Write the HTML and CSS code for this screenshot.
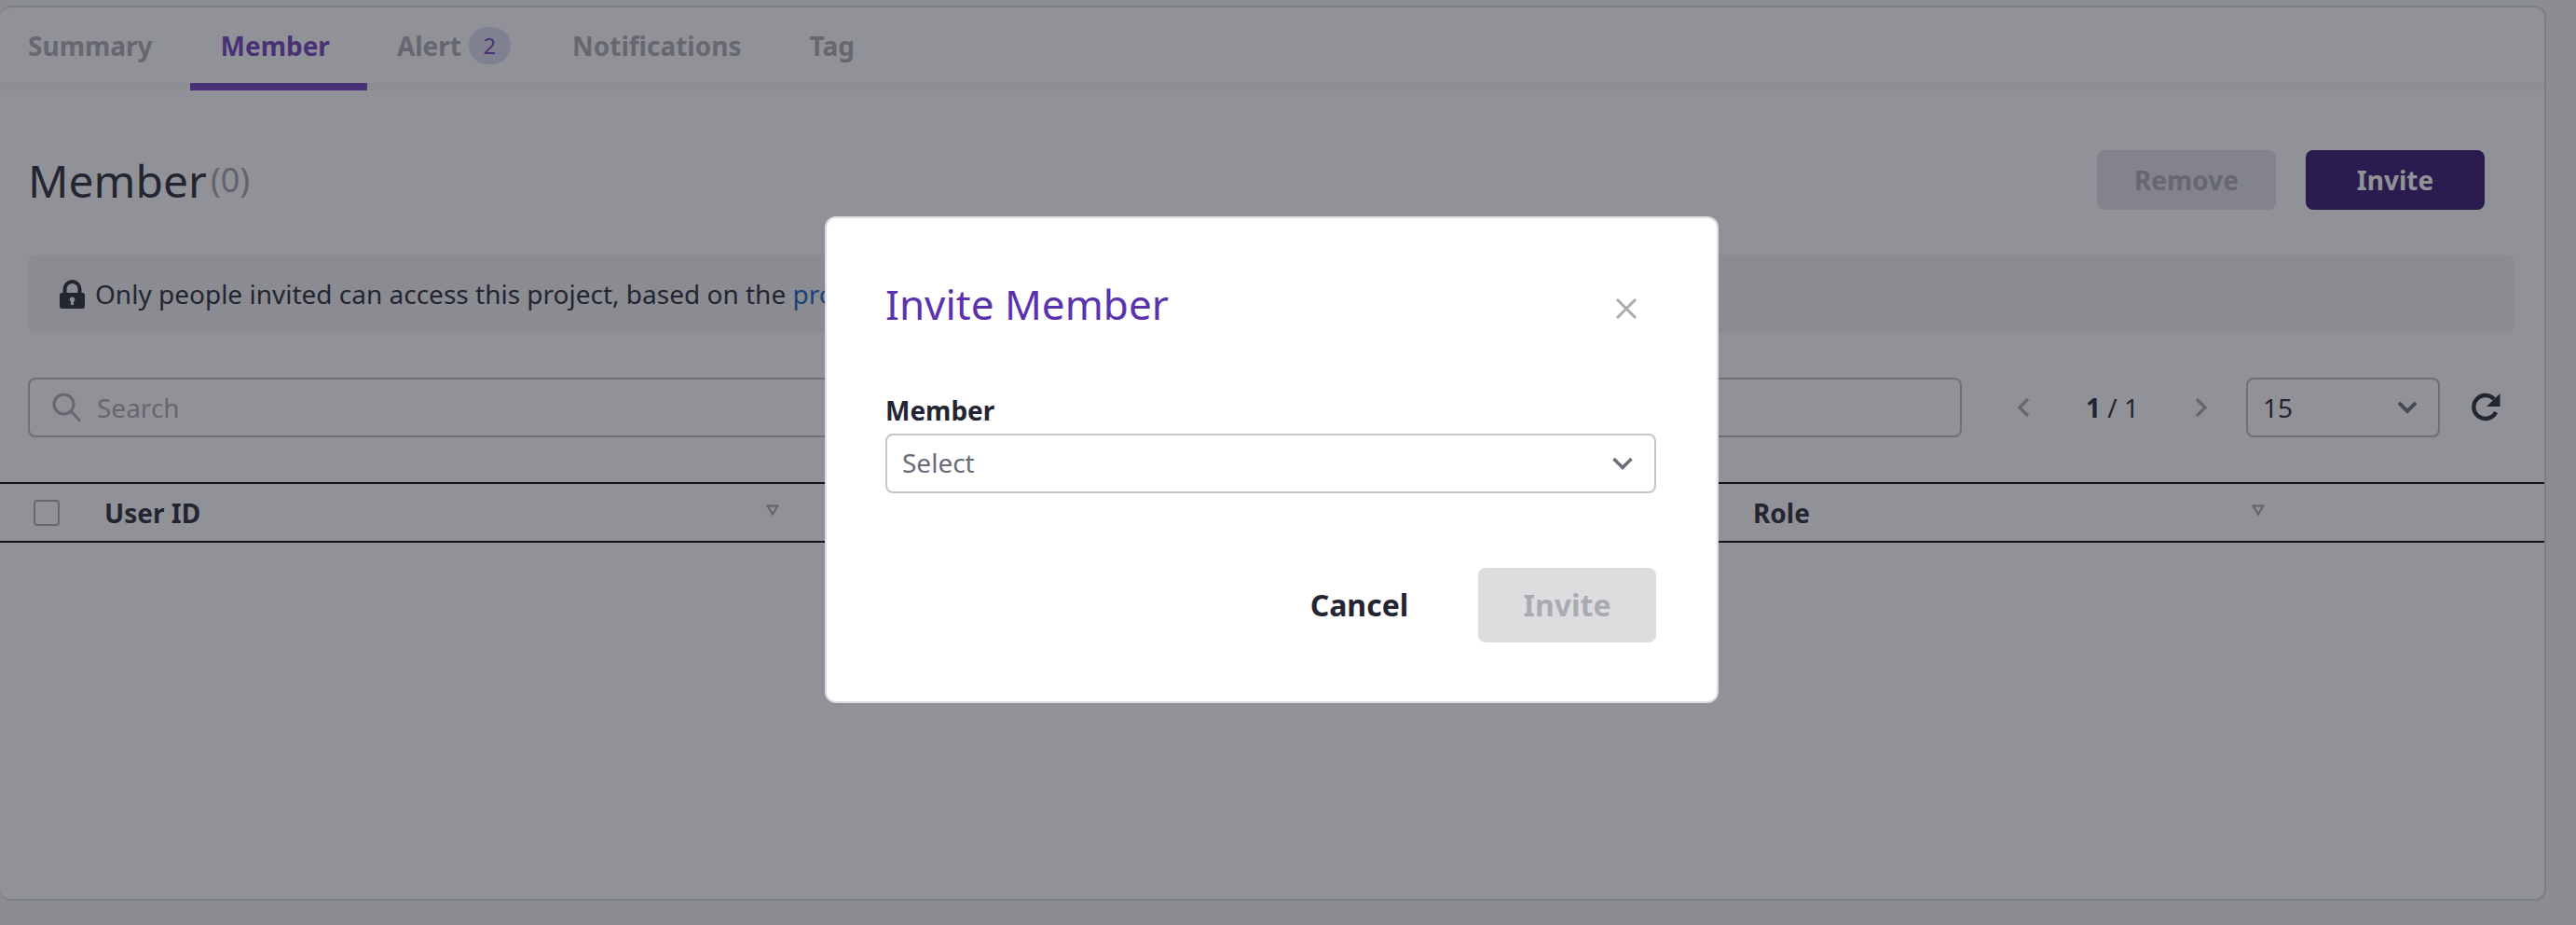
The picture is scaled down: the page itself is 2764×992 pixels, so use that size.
FILE: index.html
```html
<!DOCTYPE html>
<html lang="en">
<head>
<meta charset="utf-8">
<title>Invite Member</title>
<link rel="stylesheet" href="styles.css">
</head>
<body>
<main class="card">
  <nav class="tabs">
    <a class="tab">Summary</a>
    <a class="tab tab-active">Member</a>
    <a class="tab tab-alert">Alert <span class="badge">2</span></a>
    <a class="tab">Notifications</a>
    <a class="tab">Tag</a>
  </nav>
  <section class="content">
    <header class="page-head">
      <h1 class="page-title">Member<span class="count">(0)</span></h1>
      <div class="actions">
        <button class="btn btn-muted">Remove</button>
        <button class="btn btn-primary">Invite</button>
      </div>
    </header>
    <div class="notice">
      <svg class="lock" viewBox="0 0 27 31"><path fill-rule="evenodd" d="M3.5 14V10a10 10 0 0 1 20 0v4h1a2.500 2.500 0 0 1 2.500 2.500v12a2.500 2.500 0 0 1-2.500 2.500h-22A2.500 2.500 0 0 1 0 28.500v-12A2.500 2.500 0 0 1 2.500 14h1zm4 0h12V10a6 6 0 0 0-12 0v4zm6 4.500a2.800 2.800 0 0 0-1.500 5.200V27h3v-3.300a2.800 2.800 0 0 0-1.500-5.200z"/></svg>
      <span>Only people invited can access this project, based on the <a class="link">project</a></span>
    </div>
    <div class="toolbar">
      <label class="search">
        <svg class="search-icon" viewBox="0 0 32 32"><circle cx="12.500" cy="12.500" r="10.500"/><path d="M20 20l10 10.500"/></svg>
        <span class="placeholder">Search</span>
      </label>
      <div class="pager">
        <svg class="pager-arrow" viewBox="0 0 14 22"><path d="M12 2L3 11l9 9"/></svg>
        <span class="pager-text"><b>1</b> / 1</span>
        <svg class="pager-arrow" viewBox="0 0 14 22"><path d="M2 2l9 9-9 9"/></svg>
      </div>
      <div class="size-select">
        <span>15</span>
        <svg class="size-chevron" viewBox="0 0 22 14"><path d="M2 2l9 9 9-9"/></svg>
      </div>
      <svg class="refresh" viewBox="0 0 32 32"><path class="refresh-arc" d="M27 21a12.500 12.500 0 1 1-2-14"/><path class="refresh-head" d="M31.500 1v14H17z"/></svg>
    </div>
  </section>
  <div class="table-head">
    <div class="cell-check"><span class="checkbox"></span></div>
    <div class="th"><span>User ID</span><svg class="sort" viewBox="0 0 14 12"><path d="M1.500 1.500h11L7 10.500z"/></svg></div>
    <div class="th"></div>
    <div class="th"><span>Role</span><svg class="sort" viewBox="0 0 14 12"><path d="M1.500 1.500h11L7 10.500z"/></svg></div>
    <div class="th"></div>
  </div>
</main>

<div class="scrim">
  <div class="modal" role="dialog">
    <div class="modal-head">
      <h2 class="modal-title">Invite Member</h2>
      <svg class="close" viewBox="0 0 24 24"><path d="M2 2l20 20M22 2L2 22"/></svg>
    </div>
    <div class="field">
      <div class="field-label">Member</div>
      <div class="field-select">
        <span>Select</span>
        <svg class="field-chevron" viewBox="0 0 24 14"><path d="M2.500 2L12 11.500 21.500 2"/></svg>
      </div>
    </div>
    <div class="modal-foot">
      <button class="modal-btn modal-cancel">Cancel</button>
      <button class="modal-btn modal-confirm">Invite</button>
    </div>
  </div>
</div>
</body>
</html>
```
FILE: styles.css
```css
* { box-sizing: border-box; }
html, body { height: 100%; }
body {
  margin: 0;
  padding: 6px 32px 26px 0;
  background: #f5f5f1;
  font-family: "Noto Sans", sans-serif;
  font-size: 28px;
  color: #232533;
  overflow: hidden;
}
.card {
  height: 960px;
  background: #fff;
  border: 2px solid #d5d6dc;
  border-left: 0;
  border-radius: 12px;
  overflow: hidden;
}
.tabs {
  display: flex;
  height: 89px;
  border-bottom: 8px solid #f7f7f8;
}
.tab {
  display: flex;
  align-items: center;
  gap: 8px;
  height: 89px;
  padding: 0 40px 8px 33px;
  font-weight: 700;
  color: #a9a9b1;
  white-space: nowrap;
}
.tab:first-child { padding-left: 30px; }
.tab-alert { padding: 0 33px 8px 32px; }
.tab-active {
  color: #6f3cbc;
  padding-right: 40px;
  padding-bottom: 0;
  border-bottom: 8px solid #713bbd;
}
.badge {
  display: inline-flex;
  align-items: center;
  justify-content: center;
  width: 45px;
  height: 40px;
  border-radius: 20px;
  background: #dcdcf0;
  color: #6f3cbc;
  font-weight: 400;
  font-size: 24px;
}
.content { padding: 64px 32px 0 30px; }
.page-head {
  display: flex;
  align-items: center;
  justify-content: space-between;
  height: 64px;
  padding-right: 32px;
}
.page-title {
  margin: 0;
  font-size: 48px;
  font-weight: 400;
  line-height: 64px;
}
.count {
  margin-left: 4px;
  font-size: 36px;
  color: #a0a0a8;
  vertical-align: 6px;
}
.actions { display: flex; gap: 32px; }
.btn {
  width: 192px;
  height: 64px;
  border: 0;
  border-radius: 8px;
  font: 700 28px "Noto Sans", sans-serif;
}
.btn-muted { background: #e1e1e9; color: #a9a9b1; }
.btn-primary { background: #31136d; color: #fff; }
.notice {
  display: flex;
  align-items: center;
  gap: 11px;
  height: 84px;
  margin-top: 48px;
  padding-left: 34px;
  background: #f2f2f3;
  border-radius: 8px;
  white-space: nowrap;
}
.lock { width: 27px; height: 31px; fill: #232533; }
.link { color: #0f5fc0; }
.toolbar {
  display: flex;
  align-items: center;
  height: 64px;
  margin-top: 48px;
}
.search {
  display: flex;
  align-items: center;
  gap: 16px;
  width: 2075px;
  height: 64px;
  padding-left: 24px;
  border: 2px solid #b9b9c0;
  border-radius: 8px;
  color: #a9a9b1;
}
.search-icon { width: 32px; height: 32px; fill: none; stroke: #a9a9b1; stroke-width: 3; }
.pager {
  display: flex;
  align-items: center;
  width: 305px;
  justify-content: space-between;
  padding: 0 41px 0 59px;
}
.pager-arrow { width: 14px; height: 22px; fill: none; stroke: #a9a9b1; stroke-width: 3.500; }
.pager-text { font-size: 28px; }
.size-select {
  display: flex;
  align-items: center;
  justify-content: space-between;
  width: 208px;
  height: 64px;
  padding: 0 22px 0 16px;
  border: 2px solid #b9b9c0;
  border-radius: 8px;
}
.size-chevron { width: 22px; height: 14px; fill: none; stroke: #6a6c7a; stroke-width: 4; }
.refresh { width: 32px; height: 32px; margin-left: 33px; }
.refresh-arc { fill: none; stroke: #232533; stroke-width: 4.500; }
.refresh-head { fill: #232533; }
.table-head {
  display: grid;
  grid-template-columns: 96px 756px 1013px 581px 1fr;
  height: 65px;
  margin-top: 48px;
  border-top: 2px solid #000;
  border-bottom: 2px solid #000;
}
.cell-check { display: flex; align-items: center; padding-left: 36px; }
.checkbox {
  width: 28px;
  height: 28px;
  border: 2px solid #a9a9b1;
  border-radius: 4px;
  background: #fff;
}
.th {
  display: flex;
  align-items: center;
  justify-content: space-between;
  padding: 0 16px 0 16px;
  font-weight: 700;
}
.sort {
  width: 14px;
  height: 12px;
  margin-bottom: 6px;
  fill: none;
  stroke: #a0a0a8;
  stroke-width: 2;
}
.scrim {
  position: fixed;
  inset: 0;
  display: flex;
  align-items: center;
  justify-content: center;
  padding: 0 35px 6px 0;
  background: rgba(35, 37, 47, 0.5);
}
.modal {
  width: 959px;
  height: 522px;
  padding: 0 65px 0 63px;
  background: #fff;
  border: 2px solid #dcdde2;
  border-radius: 12px;
}
.modal-head {
  display: flex;
  align-items: center;
  justify-content: space-between;
  height: 100px;
  margin-top: 42px;
  padding-right: 20px;
}
.modal-title {
  margin: 0;
  font-size: 44px;
  font-weight: 400;
  color: #5b32ad;
}
.close { width: 24px; height: 24px; margin-top: 10px; fill: none; stroke: #a9abb3; stroke-width: 3; }
.field { margin-top: 45px; }
.field-label { font-weight: 700; line-height: 38px; height: 44px; }
.field-select {
  display: flex;
  align-items: center;
  justify-content: space-between;
  height: 64px;
  padding: 0 22px 0 16px;
  border: 2px solid #c5c6cd;
  border-radius: 8px;
  color: #6a6c7a;
}
.field-select span { position: relative; top: -1px; }
.field-chevron { width: 24px; height: 14px; fill: none; stroke: #6a6c7a; stroke-width: 3.500; }
.modal-foot {
  display: flex;
  justify-content: flex-end;
  gap: 32px;
  margin-top: 80px;
}
.modal-btn {
  width: 191px;
  height: 80px;
  padding-bottom: 2px;
  border: 0;
  border-radius: 8px;
  font: 700 32px "Noto Sans", sans-serif;
}
.modal-cancel { background: #fff; color: #232533; }
.modal-confirm { background: #dddde0; color: #a9abb3; }
```
